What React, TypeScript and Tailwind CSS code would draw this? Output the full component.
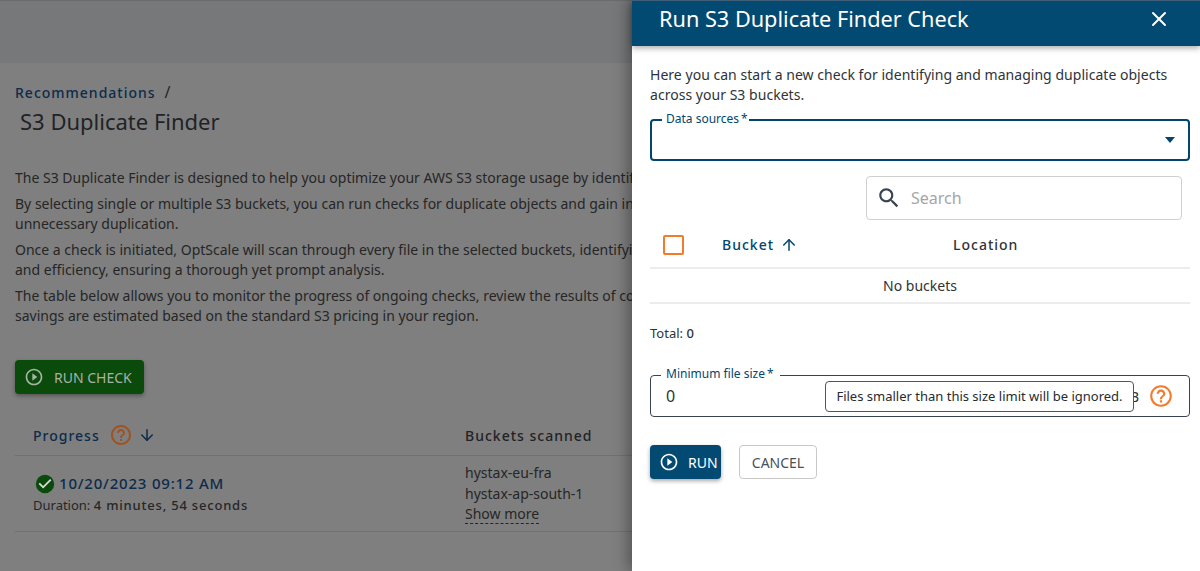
import React from 'react'
import { ArrowDown, ArrowUp, X } from 'lucide-react'

const PlayCircle = ({ className }: { className: string }) => (
  <svg viewBox="0 0 24 24" className={className} fill="currentColor">
    <path d="M12 2C6.48 2 2 6.48 2 12s4.48 10 10 10 10-4.48 10-10S17.52 2 12 2zm0 18c-4.41 0-8-3.59-8-8s3.59-8 8-8 8 3.59 8 8-3.59 8-8 8zm-2-3.5 6-4.5-6-4.5v9z" />
  </svg>
)

const HelpCircle = ({ className }: { className: string }) => (
  <svg viewBox="0 0 24 24" className={className} fill="currentColor">
    <path d="M11 18h2v-2h-2v2zm1-16C6.48 2 2 6.48 2 12s4.48 10 10 10 10-4.48 10-10S17.52 2 12 2zm0 18c-4.41 0-8-3.59-8-8s3.59-8 8-8 8 3.59 8 8-3.59 8-8 8zm0-14c-2.21 0-4 1.79-4 4h2c0-1.1.9-2 2-2s2 .9 2 2c0 2-3 1.75-3 5h2c0-2.25 3-2.5 3-5 0-2.21-1.79-4-4-4z" />
  </svg>
)

const CheckCircle = ({ className }: { className: string }) => (
  <svg viewBox="0 0 24 24" className={className} fill="currentColor">
    <circle cx="12" cy="12" r="10" />
    <path d="m10 17-5-5 1.41-1.41L10 14.17l7.59-7.59L19 8l-9 9z" fill="#d8d8d8" />
  </svg>
)

const SearchIcon = ({ className }: { className: string }) => (
  <svg viewBox="0 0 24 24" className={className} fill="currentColor">
    <path d="M15.5 14h-.79l-.28-.27C15.41 12.59 16 11.11 16 9.5 16 5.91 13.09 3 9.5 3S3 5.91 3 9.5 5.91 16 9.5 16c1.61 0 3.09-.59 4.23-1.57l.27.28v.79l5 4.99L20.49 19l-4.99-5zm-6 0C7.01 14 5 11.99 5 9.5S7.01 5 9.5 5 14 7.01 14 9.5 11.99 14 9.5 14z" />
  </svg>
)

const paragraphs = [
  ['The S3 Duplicate Finder is designed to help you optimize your AWS S3 storage usage by identifying duplicate objects.'],
  ['By selecting single or multiple S3 buckets, you can run checks for duplicate objects and gain insights into', 'unnecessary duplication.'],
  ['Once a check is initiated, OptScale will scan through every file in the selected buckets, identifying copies', 'and efficiency, ensuring a thorough yet prompt analysis.'],
  ['The table below allows you to monitor the progress of ongoing checks, review the results of completed ones;', 'savings are estimated based on the standard S3 pricing in your region.'],
]

const Page = () => (
  <div className="h-[571px] bg-[#7f7f7f] text-[#262626]">
    <div className="h-[63px] border-t border-[#6a6b6d] bg-[#77787a]" />

    <div className="px-[15px]">
      <div className="mt-[19px] flex h-[20px] items-center text-[14px] font-medium tracking-[1px] text-[#0d2b4a]">
        Recommendations
        <span className="ml-[9px] text-[16px] font-normal text-[#262626]">/</span>
      </div>
      <h1 className="mt-[3px] pl-[5px] text-[22px] leading-[32px] text-[#1f2326]">S3 Duplicate Finder</h1>

      <div className="mt-[31px] flex flex-col gap-[6px] text-[14px] leading-[20px] whitespace-nowrap">
        {paragraphs.map((lines, index) => (
          <p key={index}>
            {lines.map((line) => (
              <span key={line} className="block">{line}</span>
            ))}
          </p>
        ))}
      </div>

      <button className="mt-[34px] flex h-[34px] w-[129px] items-center gap-[10px] rounded-[4px] bg-[#0a4a0a] pl-[9px] text-[14px] text-[#a8b2a8] shadow-[0_2px_4px_rgba(0,0,0,0.35)]">
        <PlayCircle className="h-[20px] w-[20px]" />
        RUN CHECK
      </button>

      <div className="mt-[21px] grid h-[41px] grid-cols-[450px_1fr] items-center border-b border-[#717171] text-[14px] font-medium tracking-[1px]">
        <div className="flex items-center pl-[18px] text-[#0d2b4a]">
          Progress
          <HelpCircle className="ml-[9px] h-[24px] w-[24px] text-[#a0521f]" />
          <ArrowDown className="ml-[5px] h-[18px] w-[18px]" strokeWidth={2} />
        </div>
        <div className="text-[#1f2326]">Buckets scanned</div>
      </div>

      <div className="grid h-[76px] grid-cols-[450px_1fr] items-center border-b border-[#717171]">
        <div className="pl-[18px]">
          <div className="flex items-center gap-[3px] pl-[1px] text-[15px] font-medium leading-[21px] tracking-[0.8px] text-[#0d2b4a]">
            <CheckCircle className="h-[22px] w-[22px] text-[#0a4a0a]" />
            10/20/2023 09:12 AM
          </div>
          <div className="text-[13px] leading-[20px]">
            Duration: <span className="font-medium tracking-[0.8px]">4 minutes, 54 seconds</span>
          </div>
        </div>
        <div className="pt-[1px] text-[14px] leading-[20.5px]">
          <div>hystax-eu-fra</div>
          <div>hystax-ap-south-1</div>
          <span className="border-b border-dashed border-[#262626]">Show more</span>
        </div>
      </div>
    </div>
  </div>
)

const Drawer = () => (
  <div className="absolute inset-y-0 right-0 w-[568px] bg-white text-[#2f3338] shadow-[-4px_0_14px_rgba(0,0,0,0.35)]">
    <div className="flex h-[46px] items-center justify-between border-t border-[#3f6078] bg-[#034a72] pb-[9px] pl-[27px] pr-[29px] text-white shadow-[0_2px_6px_rgba(0,0,0,0.35)]">
      <h2 className="text-[21.7px] leading-[28px]">Run S3 Duplicate Finder Check</h2>
      <X className="h-[24px] w-[24px]" strokeWidth={2} />
    </div>

    <div className="pl-[18px] pr-[10px]">
      <p className="mt-[19px] text-[14px] leading-[20px] tracking-[0.03px]">
        Here you can start a new check for identifying and managing duplicate objects
        <br />
        across your S3 buckets.
      </p>

      <div className="relative mt-[14px] flex h-[42px] items-center justify-end rounded-[4px] border-2 border-[#03466d] pr-[13px]">
        <span className="absolute -top-[9px] left-[10px] bg-white pl-[4px] pr-[1px] text-[12px] leading-[14px] text-[#03466d]">Data sources&#8201;*</span>
        <div className="h-0 w-0 border-x-[5px] border-t-[6px] border-x-transparent border-t-[#03466d]" />
      </div>

      <div className="mt-[15px] flex justify-end pr-[8px]">
        <div className="flex h-[44px] w-[316px] items-center rounded-[4px] border border-[#cfcfcf] pl-[9px]">
          <SearchIcon className="h-[26px] w-[26px] text-[#3a4450]" />
          <span className="ml-[9px] text-[16px] text-[#a4a6a8]">Search</span>
        </div>
      </div>

      <div className="grid h-[49px] grid-cols-[72px_231px_1fr] items-center border-b-2 border-[#ececec] pt-[2px] text-[14px] font-medium tracking-[1px]">
        <div className="pl-[13px]">
          <div className="h-[20px] w-[21px] rounded-[2px] border-2 border-[#f47b2c]" />
        </div>
        <div className="flex items-center gap-[6px] text-[#03466d]">
          Bucket
          <ArrowUp className="h-[18px] w-[18px]" strokeWidth={2} />
        </div>
        <div className="text-[#2f3338]">Location</div>
      </div>

      <div className="flex h-[35px] items-center justify-center border-b-2 border-[#ececec] text-[14px]">No buckets</div>

      <div className="mt-[20px] text-[13px] leading-[18px]">
        Total: <span className="font-medium">0</span>
      </div>

      <div className="relative mt-[33px] flex h-[42px] items-center justify-between rounded-[4px] border border-[#3a4450] pl-[15px] pr-[15px]">
        <span className="absolute -top-[9px] left-[10px] bg-white pl-[5px] pr-[6px] text-[12px] leading-[14px] text-[#03466d]">Minimum file size&#8201;*</span>
        <span className="text-[16px]">0</span>
        <span className="flex items-center gap-[9px]">
          <span className="text-[14px]">B</span>
          <HelpCircle className="h-[26px] w-[26px] text-[#f47b2c]" />
        </span>
        <div className="absolute left-[174px] top-[5px] flex h-[31px] w-[309px] items-center justify-center rounded-[4px] border border-[#4a5766] bg-white text-[13px] text-[#262b30]">
          Files smaller than this size limit will be ignored.
        </div>
      </div>

      <div className="mt-[28px] flex gap-[18px]">
        <button className="flex h-[34px] w-[71px] items-center gap-[9px] rounded-[4px] bg-[#034a72] pl-[9px] text-[14px] text-white shadow-[0_2px_4px_rgba(0,0,0,0.35)]">
          <PlayCircle className="h-[20px] w-[20px]" />
          RUN
        </button>
        <button className="h-[34px] w-[78px] rounded-[4px] border border-[#c9c9c9] text-[14px] text-[#4a5158]">CANCEL</button>
      </div>
    </div>
  </div>
)

const App = () => (
  <div className="relative h-[571px] overflow-hidden font-['Noto_Sans',sans-serif]">
    <Page />
    <Drawer />
  </div>
)

export default App
